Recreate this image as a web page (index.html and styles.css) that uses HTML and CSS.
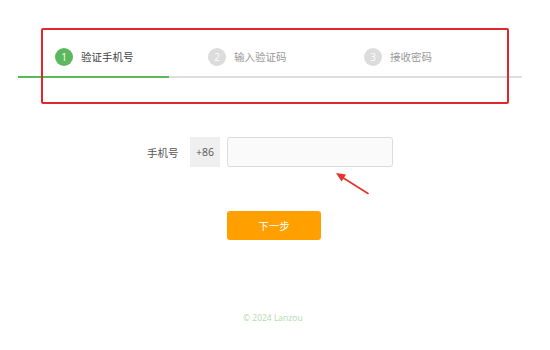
FILE: index.html
```html
<!DOCTYPE html>
<html lang="zh">
<head>
<meta charset="utf-8">
<title>验证手机号</title>
<link rel="stylesheet" href="styles.css">
</head>
<body>
<div class="page">
  <div class="steps">
    <div class="step-row">
      <div class="step active"><span class="num">1</span><span class="label">验证手机号</span></div>
      <div class="step"><span class="num">2</span><span class="label">输入验证码</span></div>
      <div class="step"><span class="num">3</span><span class="label">接收密码</span></div>
    </div>
    <div class="progress"><div class="progress-done"></div></div>
  </div>

  <div class="form-row">
    <label class="field-label" for="phone">手机号</label>
    <span class="prefix">+86</span>
    <input id="phone" class="phone-input" type="text">
  </div>

  <div class="btn-row">
    <button class="next-btn" type="button">下一步</button>
  </div>

  <footer class="footer">© 2024 Lanzou</footer>

  <div class="annot-box"></div>
  <svg class="annot-arrow" width="550" height="350" viewBox="0 0 550 350">
    <line x1="368" y1="193.5" x2="341" y2="176.5" stroke="#e5322d" stroke-width="1.6" stroke-linecap="round"/>
    <polygon points="336,173 346,174.6 341.6,181.4" fill="#e5322d"/>
  </svg>
</div>
</body>
</html>
```

FILE: styles.css
```css
html, body {
  margin: 0;
  padding: 0;
  background: #ffffff;
}

body {
  font-family: "Noto Sans CJK SC", "Noto Sans", "Liberation Sans", sans-serif;
  font-size: 10.5px;
  color: #555;
}

.page {
  position: relative;
  width: 550px;
  height: 350px;
  overflow: hidden;
}

.steps {
  margin: 0 0 0 18px;
  width: 504px;
  padding-top: 48px;
}

.step-row {
  display: grid;
  grid-template-columns: 153px 156px auto;
  padding-left: 37px;
  height: 18px;
}

.step {
  display: flex;
  align-items: center;
  gap: 8px;
}

.num {
  width: 18px;
  height: 18px;
  border-radius: 50%;
  background: #dcdcdc;
  color: #fff;
  display: flex;
  align-items: center;
  justify-content: center;
  font-family: "Open Sans", "Liberation Sans", sans-serif;
  font-size: 10px;
  line-height: 1;
}

.step.active .num {
  background: #5cb85c;
}

.label {
  color: #999;
  font-size: 10.5px;
  line-height: 18px;
}

.step.active .label {
  color: #444;
}

.progress {
  margin-top: 10px;
  height: 2px;
  background: #dedede;
}

.progress-done {
  width: 151px;
  height: 2px;
  background: #5cb85c;
}

.form-row {
  display: flex;
  align-items: center;
  margin: 59px 0 0 147px;
  height: 30px;
}

.field-label {
  width: 32px;
  color: #555;
  font-size: 10.5px;
}

.prefix {
  margin-left: 11px;
  width: 30px;
  height: 30px;
  background: #efefef;
  color: #555;
  display: flex;
  align-items: center;
  justify-content: center;
  font-family: "Open Sans", "Liberation Sans", sans-serif;
  font-size: 10.5px;
}

.phone-input {
  margin: 0 0 0 7px;
  box-sizing: border-box;
  width: 166px;
  height: 30px;
  border: 1px solid #dcdcdc;
  border-radius: 3px;
  background: #fafafa;
  padding: 0 8px;
  outline: none;
}

.btn-row {
  margin: 44px 0 0 227px;
}

.next-btn {
  display: block;
  width: 94px;
  height: 29px;
  border: none;
  border-radius: 3px;
  background: #ffa000;
  color: #fff;
  font-family: "Noto Sans CJK SC", sans-serif;
  font-size: 10.5px;
  padding: 0;
}

.footer {
  margin: 72px 0 0 243px;
  color: #b3d9ad;
  font-family: "Open Sans", "Liberation Sans", sans-serif;
  font-size: 8.5px;
  line-height: 12px;
}

.annot-box {
  position: absolute;
  left: 41px;
  top: 28px;
  width: 468px;
  height: 76px;
  box-sizing: border-box;
  border: 2px solid #e3262b;
  border-radius: 2px;
}

.annot-arrow {
  position: absolute;
  left: 0;
  top: 0;
  pointer-events: none;
}
```
